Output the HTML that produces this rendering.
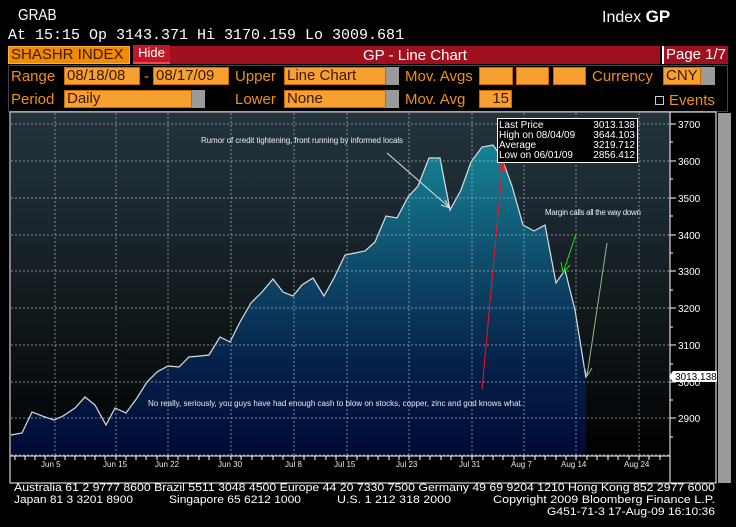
<!DOCTYPE html>
<html><head><meta charset="utf-8"><style>
body{margin:0;background:#000;width:736px;height:527px;overflow:hidden;position:relative;font-family:"Liberation Sans",sans-serif;}
.a{position:absolute;white-space:nowrap}
.w{color:#fff}
.o{color:#f0900f;font-size:15px}
.f{position:absolute;background:#f5a030;border:1px solid #c86a00;color:#3a1a00;font-size:15px;line-height:16px;padding-left:2px;box-sizing:border-box;height:18px}
.g{position:absolute;background:#9a9a9a;height:18px}
</style></head><body>
<div class="a w" style="left:18px;top:7px;font-size:16px;transform:scaleX(.85);transform-origin:left">GRAB</div>
<div class="a w" style="left:602px;top:7px;font-size:16px">Index <b style="font-size:17px">GP</b></div>
<div class="a w" style="left:8px;top:27px;font-family:'Liberation Mono',monospace;font-size:15px">At 15:15  Op 3143.371 Hi 3170.159 Lo 3009.681</div>
<div class="a" style="left:170px;top:46px;width:490px;height:18px;background:#a0101e"></div>
<div class="a w" style="left:170px;top:47px;width:490px;text-align:center;font-size:15px">GP - Line Chart</div>
<div class="f" style="left:8px;top:46px;width:122px;background:#f08a00;border:1px solid #ffb040">SHASHR INDEX</div>
<div class="a w" style="left:133px;top:45px;width:37px;height:19px;background:#c01828;border-bottom:2px solid #ff4050;font-size:13px;text-align:center;line-height:16px;box-sizing:border-box">Hide</div>
<div class="a w" style="left:662px;top:46px;width:66px;height:18px;background:#a0101e;border-left:2px solid #fff;font-size:15px;text-align:center;line-height:18px;box-sizing:border-box">Page 1/7</div>
<div class="a" style="left:8px;top:65px;width:720px;height:47px;border:1px solid #444;box-sizing:border-box"></div>
<div class="a o" style="left:11px;top:68px">Range</div>
<div class="f" style="left:64px;top:67px;width:76px">08/18/08</div>
<div class="a o" style="left:144px;top:68px">-</div>
<div class="f" style="left:153px;top:67px;width:76px">08/17/09</div>
<div class="a o" style="left:235px;top:68px">Upper</div>
<div class="f" style="left:284px;top:67px;width:102px">Line Chart</div><div class="g" style="left:386px;top:67px;width:13px"></div>
<div class="a o" style="left:405px;top:68px">Mov. Avgs</div>
<div class="f" style="left:479px;top:67px;width:34px"></div>
<div class="f" style="left:516px;top:67px;width:33px"></div>
<div class="f" style="left:553px;top:67px;width:33px"></div>
<div class="a o" style="left:592px;top:68px">Currency</div>
<div class="f" style="left:663px;top:67px;width:38px">CNY</div><div class="g" style="left:701px;top:67px;width:14px"></div>
<div class="a o" style="left:11px;top:91px">Period</div>
<div class="f" style="left:64px;top:90px;width:128px">Daily</div><div class="g" style="left:192px;top:90px;width:13px"></div>
<div class="a o" style="left:235px;top:91px">Lower</div>
<div class="f" style="left:284px;top:90px;width:102px">None</div><div class="g" style="left:386px;top:90px;width:13px"></div>
<div class="a o" style="left:405px;top:91px">Mov. Avg</div>
<div class="f" style="left:479px;top:90px;width:33px;text-align:right;padding-right:2px">15</div>
<div class="a" style="left:655px;top:96px;width:9px;height:9px;border:1px solid #ccc;box-sizing:border-box"></div>
<div class="a o" style="left:669px;top:92px">Events</div>
<svg class="a" style="left:0;top:0" width="736" height="527">
<defs>
<linearGradient id="bg" x1="0" y1="113" x2="0" y2="456" gradientUnits="userSpaceOnUse">
<stop offset="0" stop-color="#23343c"/><stop offset=".3" stop-color="#1b2730"/><stop offset=".55" stop-color="#121a1c"/><stop offset=".8" stop-color="#090d10"/><stop offset="1" stop-color="#000"/></linearGradient>
<linearGradient id="fl" x1="0" y1="145" x2="0" y2="456" gradientUnits="userSpaceOnUse">
<stop offset="0" stop-color="#168396"/><stop offset=".35" stop-color="#0f506e"/><stop offset=".7" stop-color="#05214a"/><stop offset="1" stop-color="#000a35"/></linearGradient>
</defs>
<rect x="10" y="112" width="706" height="371" fill="none" stroke="#fff" stroke-width="1"/>
<rect x="11" y="113" width="659" height="343" fill="url(#bg)"/>
<polygon fill="url(#fl)" points="11,456 11,435 22,433 32,412 45,417 54,420 63,416 75,408 85,397 95,405 106,425 115,408 126,413 137,398 147,382 157,372 168,366 179,367 189,357 200,356 209,355 220,337 230,342 240,322 251,303 262,292 273,279 283,292 293,296 302,285 313,278 324,296 334,278 345,255 355,253 365,251 375,242 386,216 397,218 408,197 418,186 429,158 440,158 450,210 461,190 471,162 482,147 493,145 501,156 512,186 523,225 534,231 545,225 556,283 565,270 575,310 586,378 586,456"/>
<polyline fill="none" stroke="#d8e0e4" stroke-width="1.2" points="11,435 22,433 32,412 45,417 54,420 63,416 75,408 85,397 95,405 106,425 115,408 126,413 137,398 147,382 157,372 168,366 179,367 189,357 200,356 209,355 220,337 230,342 240,322 251,303 262,292 273,279 283,292 293,296 302,285 313,278 324,296 334,278 345,255 355,253 365,251 375,242 386,216 397,218 408,197 418,186 429,158 440,158 450,210 461,190 471,162 482,147 493,145 501,156 512,186 523,225 534,231 545,225 556,283 565,270 575,310 586,378"/>
<g stroke="#b0b8bc" stroke-width="1" stroke-dasharray="2,2" opacity=".7">
<line x1="11" x2="670" y1="124" y2="124"/><line x1="11" x2="670" y1="161" y2="161"/><line x1="11" x2="670" y1="198" y2="198"/><line x1="11" x2="670" y1="235" y2="235"/><line x1="11" x2="670" y1="271" y2="271"/><line x1="11" x2="670" y1="308" y2="308"/><line x1="11" x2="670" y1="345" y2="345"/><line x1="11" x2="670" y1="382" y2="382"/><line x1="11" x2="670" y1="418" y2="418"/><line x1="11" x2="670" y1="455" y2="455"/>
<line y1="113" y2="456" x1="55" x2="55"/><line y1="113" y2="456" x1="116" x2="116"/><line y1="113" y2="456" x1="168" x2="168"/><line y1="113" y2="456" x1="231" x2="231"/><line y1="113" y2="456" x1="294" x2="294"/><line y1="113" y2="456" x1="347" x2="347"/><line y1="113" y2="456" x1="409" x2="409"/><line y1="113" y2="456" x1="472" x2="472"/><line y1="113" y2="456" x1="524" x2="524"/><line y1="113" y2="456" x1="576" x2="576"/><line y1="113" y2="456" x1="639" x2="639"/>
</g>
<line x1="670" y1="112" x2="670" y2="483" stroke="#fff"/>
<line x1="10" y1="456" x2="670" y2="456" stroke="#fff"/>
<g stroke="#fff"><path d="M15 456v4M25 456v4M35 456v4M45 456v4M55 456v4M65 456v4M75 456v4M85 456v4M95 456v4M105 456v4M116 456v4M126 456v4M136 456v4M146 456v4M157 456v4M168 456v4M178 456v4M188 456v4M199 456v4M209 456v4M220 456v4M231 456v4M241 456v4M252 456v4M262 456v4M273 456v4M283 456v4M294 456v4M304 456v4M315 456v4M326 456v4M336 456v4M347 456v4M357 456v4M368 456v4M378 456v4M389 456v4M399 456v4M409 456v4M420 456v4M430 456v4M441 456v4M451 456v4M462 456v4M472 456v4M483 456v4M493 456v4M503 456v4M514 456v4M524 456v4M535 456v4M545 456v4M556 456v4M566 456v4M576 456v4M587 456v4M597 456v4M608 456v4M618 456v4M629 456v4M639 456v4M649 456v4M660 456v4"/>
<path d="M670 124h6M670 161h6M670 198h6M670 235h6M670 271h6M670 308h6M670 345h6M670 382h6M670 418h6M670 142h3M670 179h3M670 216h3M670 253h3M670 290h3M670 327h3M670 364h3M670 400h3M670 437h3" /></g>
<g fill="#fff" font-size="10" font-family="Liberation Sans">
<text x="678" y="128">3700</text><text x="678" y="165">3600</text><text x="678" y="202">3500</text><text x="678" y="239">3400</text><text x="678" y="275">3300</text><text x="678" y="312">3200</text><text x="678" y="349">3100</text><text x="678" y="386">3000</text><text x="678" y="422">2900</text>
</g>
<g fill="#e8e8e8" font-size="8" font-family="Liberation Sans">
<text x="41" y="467">Jun 5</text><text x="103" y="467">Jun 15</text><text x="155" y="467">Jun 22</text><text x="218" y="467">Jun 30</text><text x="285" y="467">Jul 8</text><text x="334" y="467">Jul 15</text><text x="396" y="467">Jul 23</text><text x="459" y="467">Jul 31</text><text x="511" y="467">Aug 7</text><text x="561" y="467">Aug 14</text><text x="624" y="467">Aug 24</text>
</g>
<rect x="673" y="371" width="44" height="11" fill="#fff"/><path d="M673 371l-4 5.5 4 5.5z" fill="#fff"/>
<text x="675" y="380" font-size="10" font-family="Liberation Sans" fill="#000">3013.138</text>
<rect x="718" y="113" width="13" height="370" fill="#9a9a9a"/>
<g fill="#e8ecee" font-size="8" font-family="Liberation Sans">
<text x="201" y="143" textLength="202">Rumor of credit tightening, front running by informed locals</text>
<text x="545" y="215" textLength="96">Margin calls all the way down</text>
<text x="148" y="406" textLength="375">No really, seriously, you guys have had enough cash to blow on stocks, copper, zinc and god knows what.</text>
</g>
<g fill="none" stroke-width="1">
<path d="M387 153L450 208M441 205l9 3-5-8" stroke="#e0e0e0"/>
<path d="M482 390L503 160M498 172l5-12 2 12" stroke="#ff1020"/>
<path d="M576 234L563 273M561 262l2 11 7-8" stroke="#20e020"/>
<path d="M607 243L587 376M584 366l3 10 5-8" stroke="#90b890"/>
</g>
<rect x="497.5" y="118.5" width="140" height="44" fill="#000" stroke="#fff"/>
<g fill="#fff" font-size="10" font-family="Liberation Sans">
<text x="499" y="128">Last Price</text><text x="635" y="128" text-anchor="end">3013.138</text>
<text x="499" y="138">High on  08/04/09</text><text x="635" y="138" text-anchor="end">3644.103</text>
<text x="499" y="148">Average</text><text x="635" y="148" text-anchor="end">3219.712</text>
<text x="499" y="158">Low on  06/01/09</text><text x="635" y="158" text-anchor="end">2856.412</text>
</g>
<g fill="#fff" font-size="11" font-family="Liberation Sans">
<text x="14" y="491" textLength="701" lengthAdjust="spacingAndGlyphs">Australia 61 2 9777 8600 Brazil 5511 3048 4500 Europe 44 20 7330 7500 Germany 49 69 9204 1210 Hong Kong 852 2977 6000</text>
<text x="14" y="503" textLength="119" lengthAdjust="spacingAndGlyphs">Japan 81 3 3201 8900</text>
<text x="169" y="503" textLength="132" lengthAdjust="spacingAndGlyphs">Singapore 65 6212 1000</text>
<text x="337" y="503" textLength="114" lengthAdjust="spacingAndGlyphs">U.S. 1 212 318 2000</text>
<text x="493" y="503" textLength="222" lengthAdjust="spacingAndGlyphs">Copyright 2009 Bloomberg Finance L.P.</text>
<text x="547" y="515" textLength="168" lengthAdjust="spacingAndGlyphs">G451-71-3 17-Aug-09 16:10:36</text>
</g>
</svg>
</body></html>
